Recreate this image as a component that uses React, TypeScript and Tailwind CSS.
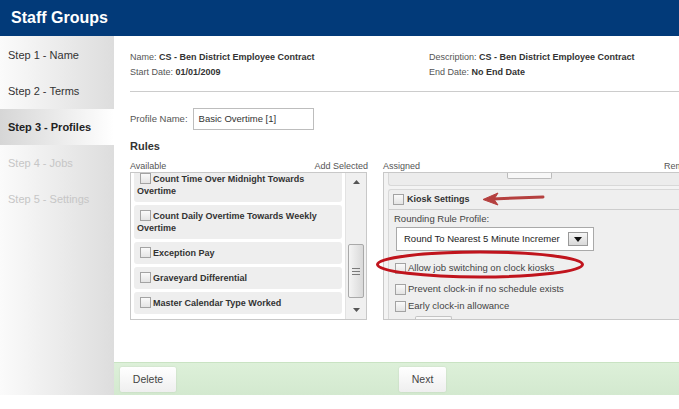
import React from "react";

function Box({ className = "" }: { className?: string }) {
  return (
    <span
      className={
        "inline-block w-[11px] h-[11px] border border-[#a3a3a3] bg-gradient-to-b from-[#fafafa] to-[#e4e4e4] shrink-0 " +
        className
      }
    />
  );
}

function Item({ text }: { text: string }) {
  return (
    <div className="rounded-[3px] bg-[#eeeeee] pl-[3px] pr-[4px] py-[5px] text-[9px] font-bold leading-[12px] text-[#333]">
      <Box className="align-[-2px] ml-[3px] mr-[2px]" />
      {text}
    </div>
  );
}

function Step({ label, state }: { label: string; state: "done" | "active" | "todo" }) {
  const base = "h-[36px] flex items-center pl-[8px] text-[11px]";
  if (state === "active")
    return (
      <div className={base + " bg-gradient-to-r from-[#d6d6d6] to-white font-bold text-[#222]"}>
        {label}
      </div>
    );
  if (state === "todo")
    return <div className={base + " text-[#c6c6c6]"}>{label}</div>;
  return <div className={base + " text-[#333]"}>{label}</div>;
}

export default function App() {
  return (
    <div className="relative w-[679px] h-[409px] overflow-hidden bg-white font-['Liberation_Sans',Arial,sans-serif]">
      <header className="h-[36px] bg-[#023a79] flex items-center pl-[11px]">
        <span className="text-white font-bold text-[16px] leading-none">Staff Groups</span>
      </header>
      <div className="flex h-[359px]">
        <aside className="w-[114px] shrink-0 bg-gradient-to-r from-[#fbfbfb] to-[#dddddd] pt-px">
          <Step label="Step 1 - Name" state="done" />
          <Step label="Step 2 - Terms" state="done" />
          <Step label="Step 3 - Profiles" state="active" />
          <Step label="Step 4 - Jobs" state="todo" />
          <Step label="Step 5 - Settings" state="todo" />
        </aside>
        <main className="flex-1 min-w-0 flex flex-col">
          <div className="flex-1 pl-[16px] pt-[14px] text-[#555]">
            <div className="grid grid-cols-[299px_1fr] text-[9px] leading-[15px] whitespace-nowrap">
              <div>
                <div>
                  Name: <span className="font-bold text-[#333]">CS - Ben District Employee Contract</span>
                </div>
                <div>
                  Start Date: <span className="font-bold text-[#333]">01/01/2009</span>
                </div>
              </div>
              <div>
                <div>
                  Description: <span className="font-bold text-[#333]">CS - Ben District Employee Contract</span>
                </div>
                <div>
                  End Date: <span className="font-bold text-[#333]">No End Date</span>
                </div>
              </div>
            </div>
            <div className="mt-[11px] border-t border-[#cccccc]" />
            <div className="mt-[16px] flex items-center gap-[5px] text-[9.5px]">
              <span>Profile Name:</span>
              <div className="h-[22px] w-[121px] border border-[#bdbdbd] bg-white flex items-center pl-[5px] text-[#333]">
                Basic Overtime [1]
              </div>
            </div>
            <div className="mt-[9px] text-[11px] font-bold leading-[14px] text-[#333]">Rules</div>
            <div className="mt-[7px] flex gap-[15px]">
              <div className="w-[238px] shrink-0">
                <div className="flex justify-between text-[9px] leading-[12px] text-[#555]">
                  <span>Available</span>
                  <span>Add Selected</span>
                </div>
                <div className="h-[148px] w-[237px] border border-[#c8c8c8] bg-white flex">
                  <div className="flex-1 overflow-hidden pl-[3px] pr-[3px]">
                    <div className="-mt-[5px] flex flex-col gap-[3px]">
                      <Item text="Count Time Over Midnight Towards Overtime" />
                      <Item text="Count Daily Overtime Towards Weekly Overtime" />
                      <Item text="Exception Pay" />
                      <Item text="Graveyard Differential" />
                      <Item text="Master Calendar Type Worked" />
                    </div>
                  </div>
                  <div className="w-[21px] shrink-0 bg-[#f0f0f0] border-l border-[#e2e2e2] flex flex-col">
                    <div className="h-[18px] flex items-center justify-center">
                      <svg width="7" height="4" viewBox="0 0 7 4">
                        <polygon points="3.5,0 7,4 0,4" fill="#555" />
                      </svg>
                    </div>
                    <div className="h-[53px]" />
                    <div className="h-[54px] mx-[2px] rounded-[2px] border border-[#a9a9a9] bg-gradient-to-r from-[#f4f4f4] to-[#d9d9d9] flex flex-col items-center justify-center gap-[2px]">
                      <div className="w-[8px] h-px bg-[#7a7a7a]" />
                      <div className="w-[8px] h-px bg-[#7a7a7a]" />
                      <div className="w-[8px] h-px bg-[#7a7a7a]" />
                    </div>
                    <div className="flex-1" />
                    <div className="h-[18px] flex items-center justify-center">
                      <svg width="7" height="4" viewBox="0 0 7 4">
                        <polygon points="0,0 7,0 3.5,4" fill="#555" />
                      </svg>
                    </div>
                  </div>
                </div>
              </div>
              <div className="w-[352px] shrink-0">
                <div className="flex justify-between text-[9px] leading-[12px] text-[#555]">
                  <span>Assigned</span>
                  <span>Remove Selected</span>
                </div>
                <div className="h-[148px] border border-[#c8c8c8] bg-[#f3f3f3] pl-[4px] overflow-hidden">
                  <div className="h-[13px] rounded-bl-[3px] border-b border-l border-[#d8d8d8] bg-[#ececec]">
                    <div className="ml-[118px] w-[45px] h-[6px] border border-t-0 border-[#bbbbbb] bg-[#f7f7f7] rounded-b-[2px]" />
                  </div>
                  <div className="mt-[3px] rounded-tl-[3px] border-l border-t border-[#d8d8d8] bg-[#efefef] h-[140px]">
                    <div className="h-[20px] border-b border-[#cdcdcd] flex items-center pl-[4px] gap-[3px]">
                      <Box />
                      <span className="text-[9px] font-bold text-[#333]">Kiosk Settings</span>
                    </div>
                    <div className="pl-[5px] pt-[2px] text-[9.5px] text-[#444]">
                      <div className="leading-[14px]">Rounding Rule Profile:</div>
                      <div className="mt-[1px] ml-[2px] w-[198px] h-[24px] border border-[#a9a9a9] bg-white flex items-center pl-[7px] text-[#222]">
                        <span className="whitespace-nowrap">Round To Nearest 5 Minute Incremer</span>
                        <div className="ml-auto mr-[5px] w-[20px] h-[14px] border border-[#999] bg-gradient-to-b from-[#f6f6f6] to-[#d8d8d8] flex items-center justify-center">
                          <svg width="8" height="5" viewBox="0 0 8 5">
                            <polygon points="0,0 8,0 4,5" fill="#111" />
                          </svg>
                        </div>
                      </div>
                      <div className="mt-[10px] h-[14px] flex items-center gap-[2px] ml-[1px]">
                        <Box />
                        <span>Allow job switching on clock kiosks</span>
                      </div>
                      <div className="mt-[7px] h-[14px] flex items-center gap-[2px] ml-[1px]">
                        <Box />
                        <span>Prevent clock-in if no schedule exists</span>
                      </div>
                      <div className="mt-[3px] h-[14px] flex items-center gap-[2px] ml-[1px]">
                        <Box />
                        <span>Early clock-in allowance</span>
                      </div>
                      <div className="mt-[3px] ml-[21px] w-[37px] h-[8px] border border-b-0 border-[#c4c4c4] bg-[#f8f8f8] rounded-t-[2px]" />
                    </div>
                  </div>
                </div>
              </div>
            </div>
          </div>
          <footer className="h-[33px] shrink-0 border-t border-[#c9e3c3] bg-gradient-to-b from-[#ddf0d9] to-[#d3e9cf] flex items-start pt-[4px]">
            <button className="ml-[6px] h-[25px] w-[56px] rounded-[2px] bg-gradient-to-b from-white to-[#efefef] shadow-[0_0_2px_rgba(0,0,0,0.12)] text-[10.5px] text-[#444]">
              Delete
            </button>
            <button className="ml-[223px] h-[25px] w-[47px] rounded-[2px] bg-gradient-to-b from-white to-[#efefef] shadow-[0_0_2px_rgba(0,0,0,0.12)] text-[10.5px] text-[#444]">
              Next
            </button>
          </footer>
        </main>
      </div>
      <svg
        className="absolute left-0 top-0 pointer-events-none"
        width="679"
        height="409"
        viewBox="0 0 679 409"
      >
        <ellipse cx="480" cy="264.5" rx="102.5" ry="12.5" fill="none" stroke="#c0141d" strokeWidth="3" />
        <path d="M492 199 L543 197" stroke="#b5403f" strokeWidth="3" strokeLinecap="round" />
        <path d="M483 199.5 L498 193 L494 199.3 L498 205 Z" fill="#b5403f" stroke="#b5403f" strokeWidth="1" strokeLinejoin="round" />
      </svg>
    </div>
  );
}
